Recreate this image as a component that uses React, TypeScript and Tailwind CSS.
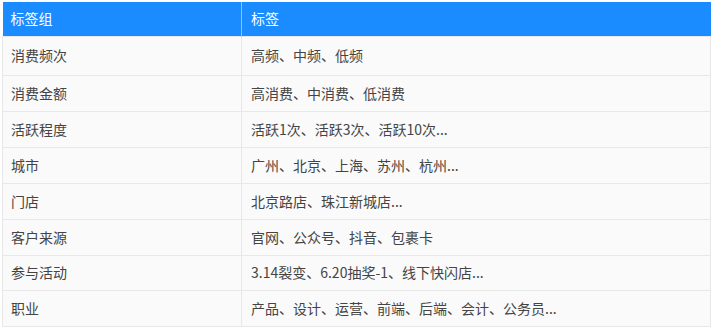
import React from 'react';

const ROWS: { group: string; tags: string; h: string }[] = [
  { group: '消费频次', tags: '高频、中频、低频', h: 'h-[39px]' },
  { group: '消费金额', tags: '高消费、中消费、低消费', h: 'h-[36px]' },
  { group: '活跃程度', tags: '活跃1次、活跃3次、活跃10次...', h: 'h-[36px]' },
  { group: '城市', tags: '广州、北京、上海、苏州、杭州...', h: 'h-[36px]' },
  { group: '门店', tags: '北京路店、珠江新城店...', h: 'h-[36px]' },
  { group: '客户来源', tags: '官网、公众号、抖音、包裹卡', h: 'h-[36px]' },
  { group: '参与活动', tags: '3.14裂变、6.20抽奖-1、线下快闪店...', h: 'h-[35px]' },
  { group: '职业', tags: '产品、设计、运营、前端、后端、会计、公务员...', h: 'h-[36px]' },
];

export default function App() {
  return (
    <div className="w-[720px] h-[335px] bg-white pt-[2px] pl-[2px] font-['Microsoft_YaHei','Noto_Sans_CJK_SC',sans-serif] text-[14px]">
      <table className="w-[709px] border-collapse table-fixed">
        <colgroup>
          <col className="w-[239px]" />
          <col />
        </colgroup>
        <thead>
          <tr className="h-[34px] bg-[#1a8cff] text-white">
            <th className="text-left font-normal pl-[8px] border-r border-[#8cc4ff]">标签组</th>
            <th className="text-left font-normal pl-[9px]">标签</th>
          </tr>
        </thead>
        <tbody className="bg-[#fafafa] text-[#444]">
          {ROWS.map(r => (
            <tr key={r.group} className={r.h}>
              <td className="pl-[8px] border border-[#e8e8e8]">{r.group}</td>
              <td className="pl-[9px] border border-[#e8e8e8]">{r.tags}</td>
            </tr>
          ))}
        </tbody>
      </table>
    </div>
  );
}
